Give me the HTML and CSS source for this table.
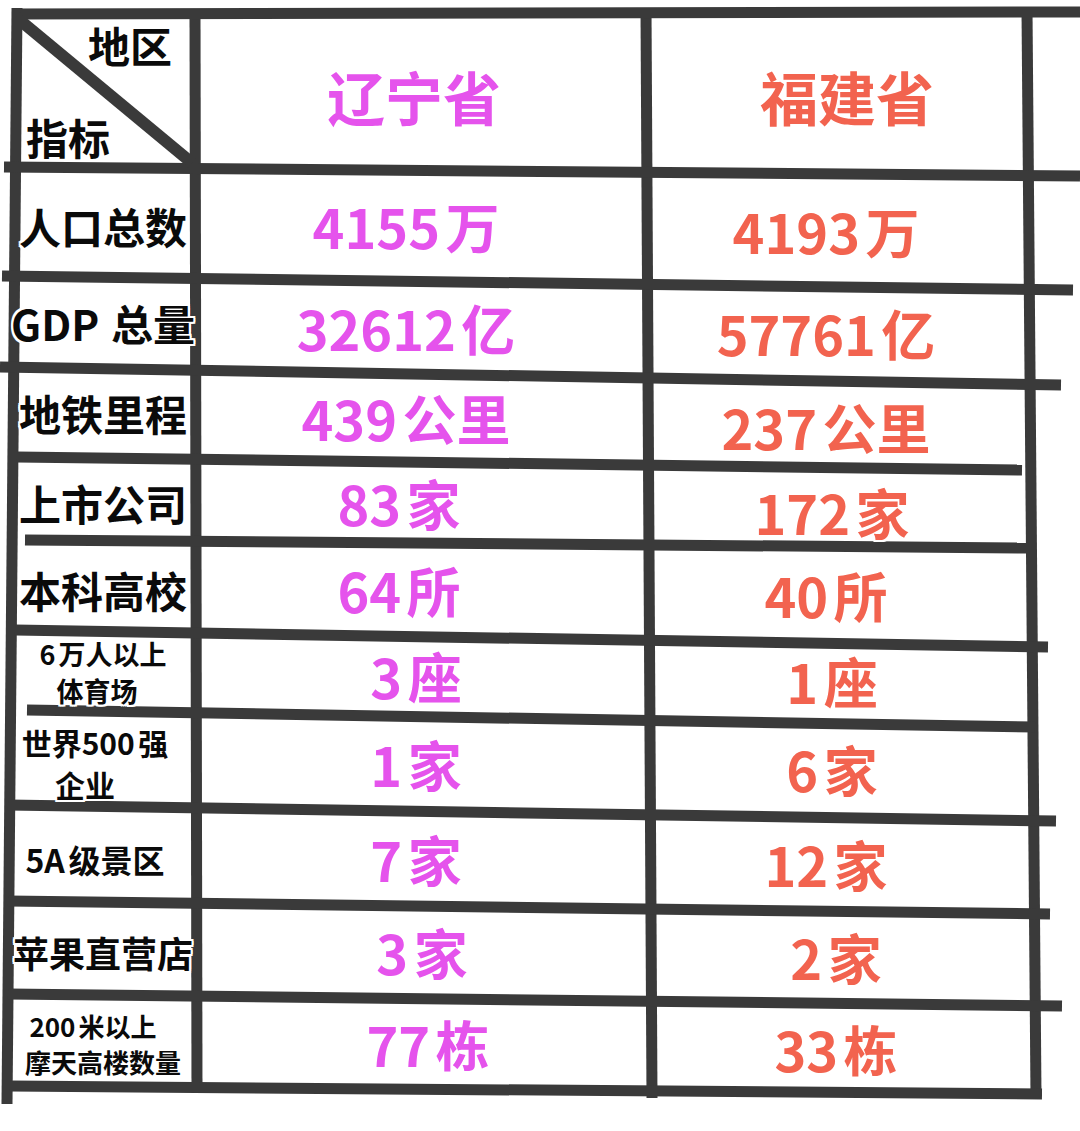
FILE: index.html
```html
<!DOCTYPE html>
<html lang="zh-CN">
<head>
<meta charset="utf-8">
<title>辽宁省 vs 福建省</title>
<link rel="stylesheet" href="styles.css">
</head>
<body>
<div class="sheet">
  <svg class="lines" width="1080" height="1131" viewBox="0 0 1080 1131" aria-hidden="true">
    <g stroke="#3a3a3a" stroke-width="11" stroke-linecap="butt" fill="none">
      <line x1="17" y1="8" x2="7" y2="1104"/>
      <line x1="195" y1="10" x2="197" y2="1093"/>
      <line x1="646" y1="10" x2="652" y2="1098"/>
      <line x1="1027" y1="10" x2="1036" y2="1096"/>
      <line x1="12" y1="14" x2="1080" y2="12"/>
      <line x1="4" y1="167" x2="1080" y2="176"/>
      <line x1="2" y1="276" x2="1073" y2="290"/>
      <line x1="0" y1="367" x2="1061" y2="385"/>
      <line x1="17" y1="457" x2="1022" y2="470"/>
      <line x1="25" y1="540" x2="1030" y2="548"/>
      <line x1="15" y1="630" x2="1048" y2="647"/>
      <line x1="27" y1="710" x2="1035" y2="727"/>
      <line x1="8" y1="805" x2="1056" y2="821"/>
      <line x1="8" y1="901" x2="1050" y2="914"/>
      <line x1="8" y1="994" x2="1062" y2="1006"/>
      <line x1="10" y1="1086" x2="1042" y2="1094"/>
      <line x1="16" y1="17" x2="192" y2="163" stroke-width="12"/>
    </g>
  </svg>

  <div class="table">
    <div class="cell corner"><span class="dq">地区</span><span class="zb">指标</span></div>
    <div class="cell ln head">辽宁省</div>
    <div class="cell fj head">福建省</div>

    <div class="cell lab">人口总数</div>
    <div class="cell ln">4155<span class="u">万</span></div>
    <div class="cell fj">4193<span class="u">万</span></div>

    <div class="cell lab up">GDP<span class="u2">总量</span></div>
    <div class="cell ln">32612<span class="u">亿</span></div>
    <div class="cell fj">57761<span class="u">亿</span></div>

    <div class="cell lab up">地铁里程</div>
    <div class="cell ln">439<span class="u">公里</span></div>
    <div class="cell fj down">237<span class="u">公里</span></div>

    <div class="cell lab">上市公司</div>
    <div class="cell ln nx-l">83<span class="u">家</span></div>
    <div class="cell fj down nx-s">172<span class="u">家</span></div>

    <div class="cell lab">本科高校</div>
    <div class="cell ln nx-l">64<span class="u">所</span></div>
    <div class="cell fj">40<span class="u">所</span></div>

    <div class="cell lab two s27 lift"><span>6<span class="u">万人以上</span></span><span class="shift-s">体育场</span></div>
    <div class="cell ln nx-m">3<span class="u">座</span></div>
    <div class="cell fj nx-s">1<span class="u">座</span></div>

    <div class="cell lab two s30 left"><span>世界500<span class="u">强</span></span><span class="shift">企业</span></div>
    <div class="cell ln nx-m">1<span class="u">家</span></div>
    <div class="cell fj nx-s">6<span class="u">家</span></div>

    <div class="cell lab s32 left">5A<span class="u">级景区</span></div>
    <div class="cell ln nx-m">7<span class="u">家</span></div>
    <div class="cell fj">12<span class="u">家</span></div>

    <div class="cell lab s36">苹果直营店</div>
    <div class="cell ln nx-b">3<span class="u">家</span></div>
    <div class="cell fj nx-m">2<span class="u">家</span></div>

    <div class="cell lab two s26"><span class="shift">200<span class="u">米以上</span></span><span>摩天高楼数量</span></div>
    <div class="cell ln nx-xb">77<span class="u">栋</span></div>
    <div class="cell fj nx-m">33<span class="u">栋</span></div>
  </div>
</div>
</body>
</html>
```

FILE: styles.css
```css
html, body {
  margin: 0;
  padding: 0;
  background: #ffffff;
}

.sheet {
  position: relative;
  width: 1080px;
  height: 1131px;
  overflow: hidden;
  font-family: "Noto Sans CJK SC", "Noto Sans", sans-serif;
  font-weight: 700;
}

.lines {
  position: absolute;
  left: 0;
  top: 0;
  z-index: 0;
}

.table {
  position: relative;
  z-index: 1;
  display: grid;
  grid-template-columns: 200px 412px 428px;
  grid-template-rows: 157px 111px 93px 88px 81px 93px 80px 95px 95px 92px 91px;
  padding-top: 13px;
}

.cell {
  display: flex;
  align-items: center;
  justify-content: center;
  line-height: 1;
  white-space: nowrap;
  text-shadow:
    0 0 1px #fff,
    2px 0 0 #fff, -2px 0 0 #fff, 0 2px 0 #fff, 0 -2px 0 #fff,
    2px 2px 0 #fff, -2px 2px 0 #fff, 2px -2px 0 #fff, -2px -2px 0 #fff;
}

.corner {
  flex-direction: column;
  align-items: stretch;
  justify-content: space-between;
  padding: 11px 26px 12px 26px;
  font-size: 42px;
  color: #0a0a0a;
}

.corner .dq {
  align-self: flex-end;
  margin-right: 2px;
}

.corner .zb {
  align-self: flex-start;
}

.lab {
  color: #0a0a0a;
  font-size: 42px;
  padding-left: 6px;
}

.lab.up {
  transform: translateY(-5px);
}

.lab.left {
  padding-left: 0;
  padding-right: 10px;
}

.lab.lift {
  transform: translateY(-4px);
}

.lab .u2 {
  margin-left: 0.28em;
}

.lab .u {
  margin-left: 0.12em;
}

.lab.two {
  flex-direction: column;
  line-height: 1.37;
}

.lab .shift {
  transform: translateX(-10px);
}

.lab .shift-s {
  transform: translateX(-6px);
}

.s26 { font-size: 26px; }
.s27 { font-size: 27px; }
.s30 { font-size: 30px; line-height: 1.3; }
.s32 { font-size: 32px; }
.s36 { font-size: 36px; }

.ln {
  color: #e553ec;
  font-size: 54px;
}

.fj {
  color: #f2634f;
  font-size: 54px;
  transform: translateY(5px);
}

.fj.down {
  transform: translateY(9px);
}

.ln .u,
.fj .u {
  margin-left: 0.1em;
}

/* small horizontal nudges following the hand-placed text */
.nx-l { translate: -7px 0; }
.nx-s { translate: 6px 0; }
.nx-m { translate: 10px 0; }
.nx-b { translate: 16px 0; }
.nx-xb { translate: 22px 0; }

.head {
  font-size: 58px;
  padding-top: 8px;
}

.ln.head {
  transform: translateX(8px);
}

.fj.head {
  transform: translate(21px, 0);
}
```
